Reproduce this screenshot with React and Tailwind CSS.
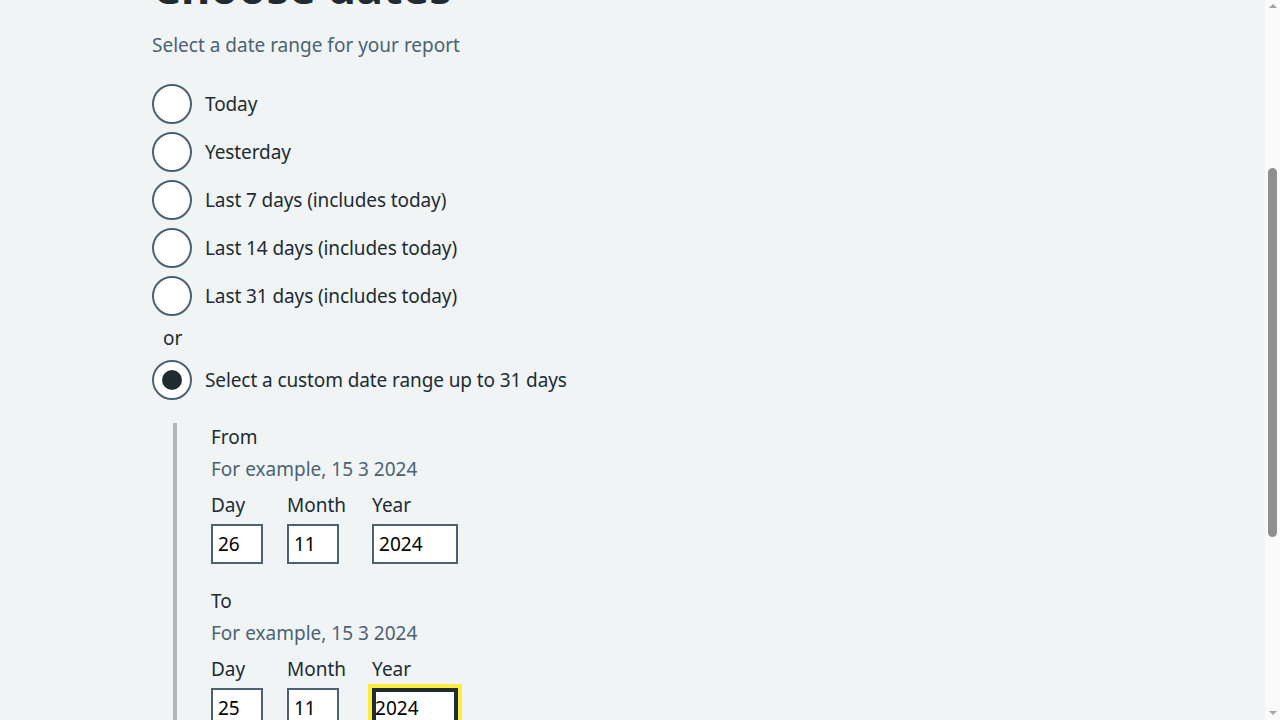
import React from "react";

const options = [
  "Today",
  "Yesterday",
  "Last 7 days (includes today)",
  "Last 14 days (includes today)",
  "Last 31 days (includes today)",
];

function Radio({ label, checked }) {
  return (
    <label className="flex items-center h-10 mb-2">
      <span className="w-10 h-10 rounded-full border-2 border-[#4c6272] bg-white flex items-center justify-center shrink-0">
        {checked && <span className="w-5 h-5 rounded-full bg-[#212b32]"></span>}
      </span>
      <span className="ml-[13px] text-[19px] leading-7 text-[#212b32] tracking-[-0.1px]">{label}</span>
    </label>
  );
}

function DateInput({ legend, day, month, year, focusYear }) {
  return (
    <div>
      <div className="text-[19px] leading-7 text-[#212b32]">{legend}</div>
      <div className="mt-1 text-[19px] leading-7 text-[#4c6272]">For example, 15 3 2024</div>
      <div className="mt-2 flex">
        <div className="mr-6">
          <div className="text-[19px] leading-7 text-[#212b32]">Day</div>
          <div className="mt-[5px] w-[52px] h-10 border-2 border-[#4c6272] bg-white flex items-center px-[5px] text-[19px] text-black">{day}</div>
        </div>
        <div className="mr-[26px]">
          <div className="text-[19px] leading-7 text-[#212b32]">Month</div>
          <div className="mt-[5px] w-[52px] h-10 border-2 border-[#4c6272] bg-white flex items-center px-[5px] text-[19px] text-black">{month}</div>
        </div>
        <div>
          <div className="text-[19px] leading-7 text-[#212b32]">Year</div>
          {focusYear ? (
            <div className="mt-[5px] w-[86px] h-10 border-2 border-[#212b32] bg-white flex items-center px-px text-[19px] text-black outline-4 outline-[#ffeb3b] shadow-[inset_0_0_0_2px_#212b32]">{year}</div>
          ) : (
            <div className="mt-[5px] w-[86px] h-10 border-2 border-[#4c6272] bg-white flex items-center px-[5px] text-[19px] text-black">{year}</div>
          )}
        </div>
      </div>
    </div>
  );
}

export default function App() {
  return (
    <div
      className="h-screen overflow-hidden bg-[#f0f4f5] flex"
      style={{ fontFamily: '"Noto Sans", "Open Sans", sans-serif' }}
    >
      <div className="flex-1 pl-[152px]">
        <h1 className="mt-[-41px] text-[45px] leading-[56px] font-bold text-[#212b32]">Choose dates</h1>
        <p className="mt-[16px] text-[19px] leading-7 text-[#4c6272]">Select a date range for your report</p>
        <div className="mt-[25px]">
          {options.map(o => (
            <Radio key={o} label={o} />
          ))}
          <div className="h-[44px] -mt-2 flex items-center pl-[11px] text-[19px] text-[#212b32]">or</div>
          <Radio label="Select a custom date range up to 31 days" checked />
          <div className="mt-[23px] ml-[21px] border-l-4 border-[#aeb7bd] pl-[34px] pb-10">
            <DateInput legend="From" day="26" month="11" year="2024" />
            <div className="mt-[23px]">
              <DateInput legend="To" day="25" month="11" year="2024" focusYear />
            </div>
          </div>
        </div>
      </div>
      <div className="w-[15px] h-full bg-[#fafafa] relative shrink-0">
        <div className="absolute top-[4px] left-[4px] w-0 h-0 border-l-[4px] border-r-[4px] border-b-[4px] border-l-transparent border-r-transparent border-b-[#a3a3a3]"></div>
        <div className="absolute top-[168px] left-[3px] w-[9px] h-[369px] rounded-full bg-[#8f8f8f]"></div>
        <div className="absolute bottom-[5px] left-[4px] w-0 h-0 border-l-[4px] border-r-[4px] border-t-[4px] border-l-transparent border-r-transparent border-t-[#a3a3a3]"></div>
      </div>
    </div>
  );
}
